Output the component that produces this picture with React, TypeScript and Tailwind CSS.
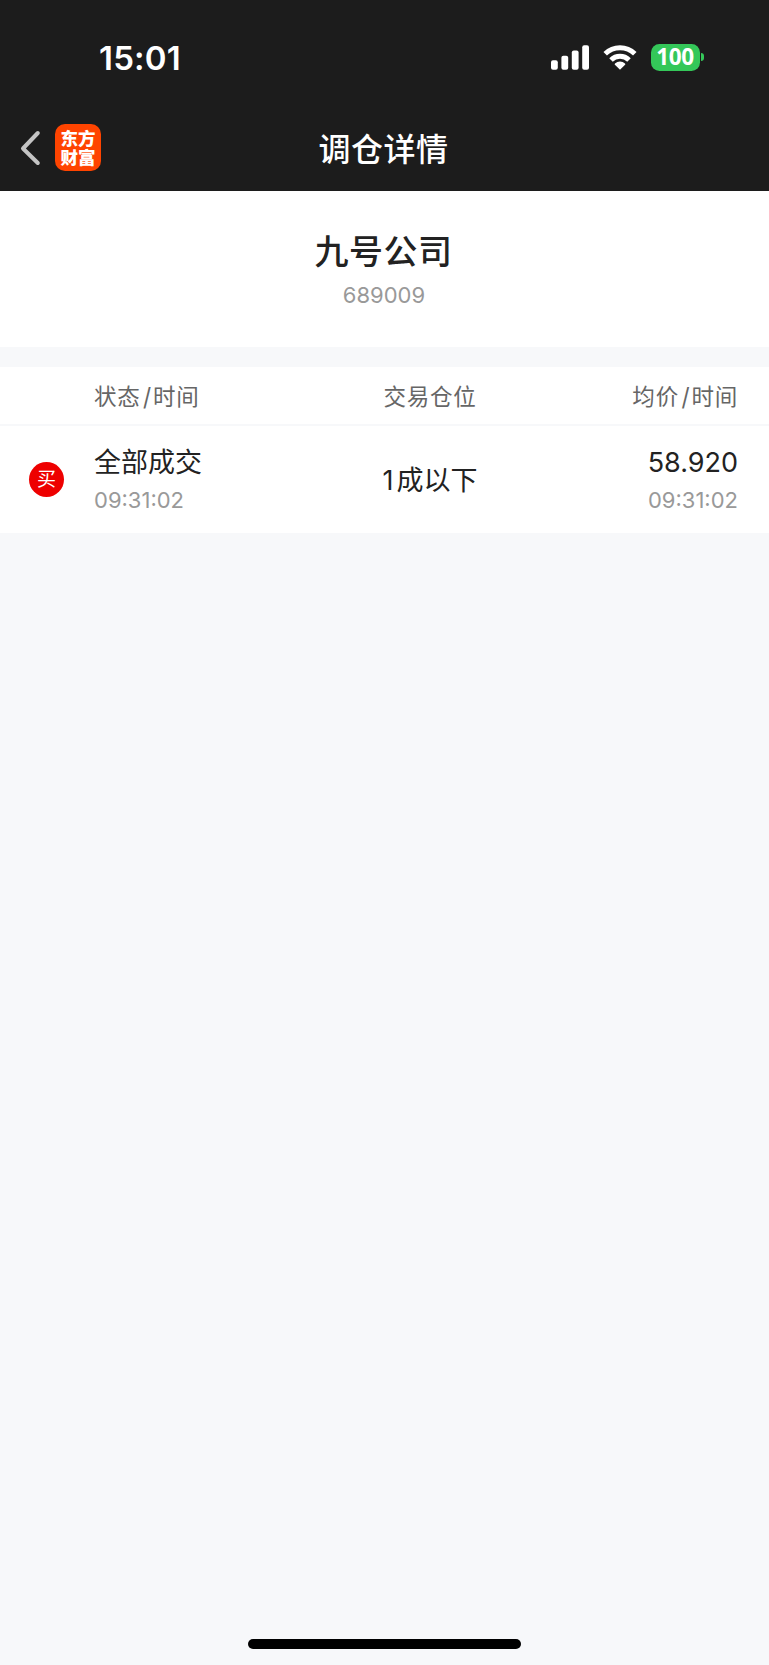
import type { ReactNode } from 'react';

interface Trade {
  side: string;
  status: string;
  statusTime: string;
  positionLevel: string;
  positionText: string;
  price: string;
  priceTime: string;
}

const trades: Trade[] = [
  {
    side: '买',
    status: '全部成交',
    statusTime: '09:31:02',
    positionLevel: '1',
    positionText: '成以下',
    price: '58.920',
    priceTime: '09:31:02',
  },
];

function SignalIcon() {
  return (
    <svg className="h-[25px] w-[39px]" viewBox="0 0 39 25" fill="currentColor">
      <rect x="0" y="15.3" width="6.8" height="9.5" rx="2" />
      <rect x="10.4" y="10.8" width="6.8" height="14" rx="2" />
      <rect x="20.8" y="5.5" width="6.8" height="19.3" rx="2" />
      <rect x="31.2" y="0.3" width="6.8" height="24.5" rx="2" />
    </svg>
  );
}

function WifiIcon() {
  return (
    <svg className="ml-[13px] h-[25px] w-[34px]" viewBox="0 0 34 25">
      <g fill="none" stroke="currentColor" strokeWidth="5">
        <path d="M2.2 8.7a21.2 21.2 0 0 1 29.6 0" />
        <path d="M8 15a12.8 12.8 0 0 1 18 0" />
      </g>
      <path d="M17 24.8l-5.1-5.1q-.6-.7.1-1.3a7.6 7.6 0 0 1 10 0q.7.6.1 1.3z" fill="currentColor" />
    </svg>
  );
}

function Battery() {
  return (
    <div className="ml-[14px] flex items-center">
      <div className="flex h-[27px] w-[49px] items-center justify-center rounded-[8.5px] bg-[#34c759] pb-px font-['Open_Sans',sans-serif] text-[22.5px] leading-[26px] font-bold tracking-[-0.3px]">
        100
      </div>
      <div className="ml-[1.5px] h-2 w-[3px] rounded-r-full bg-[#34c759]" />
    </div>
  );
}

function StatusBar() {
  return (
    <div className="flex h-[104px] items-start justify-between pt-[43px] pr-[65px] pl-[99px]">
      <div className="pt-px text-[33px] leading-7 font-semibold tracking-[0.2px]">15:01</div>
      <div className="flex h-7 items-center">
        <SignalIcon />
        <WifiIcon />
        <Battery />
      </div>
    </div>
  );
}

function NavBar() {
  return (
    <div className="grid h-[87px] grid-cols-[1fr_auto_1fr] items-center">
      <div className="flex items-center pl-5">
        <svg className="h-9 w-[22px]" viewBox="0 0 22 36" fill="none" stroke="#c4c4c4" strokeWidth="4" strokeLinecap="round" strokeLinejoin="round">
          <path d="M17.8 3L3 18.5L17.8 33" />
        </svg>
        <div className="ml-[13px] flex h-[47px] w-[46px] flex-col items-center justify-center rounded-[10px] bg-[#ff4400] text-[17.5px] leading-[19px] font-black">
          <span>东方</span>
          <span>财富</span>
        </div>
      </div>
      <h1 className="pt-1 pr-0.5 text-[32px] leading-10 font-medium tracking-[0.5px]">调仓详情</h1>
    </div>
  );
}

function ColumnTitle({ name }: { name: string }) {
  return (
    <>
      {name}
      <span className="mr-px ml-[2.5px] inline-block scale-y-110">/</span>
      时间
    </>
  );
}

function Cell({ main, time }: { main: ReactNode; time: string }) {
  return (
    <div>
      <div className="text-[27px] leading-9 text-[#222]">{main}</div>
      <div className="mt-[3px] text-[22px] leading-8 text-[#999]">{time}</div>
    </div>
  );
}

export default function App() {
  return (
    <div className="flex h-[1665px] w-[769px] flex-col bg-[#f7f8fa] font-['Inter','Noto_Sans_CJK_SC',sans-serif]">
      <header className="h-[191px] bg-[#1c1c1c] text-white">
        <StatusBar />
        <NavBar />
      </header>

      <section className="h-[156px] bg-white pt-9 text-center">
        <h2 className="mr-0.5 text-[34px] leading-[50px] font-medium tracking-[0.5px] text-[#222]">九号公司</h2>
        <p className="mt-0.5 mr-px text-[22px] leading-8 text-[#999]">689009</p>
      </section>

      <section className="mt-5 bg-white">
        <div className="flex h-[59px] items-center border-b-2 border-[#f7f8fa] pt-0.5 pr-[31px] pl-[94px] text-[22.5px] tracking-[0.8px] text-[#666]">
          <div className="w-[222px]">
            <ColumnTitle name="状态" />
          </div>
          <div className="w-[228px] text-center">交易仓位</div>
          <div className="flex-1 text-right">
            <ColumnTitle name="均价" />
          </div>
        </div>
        {trades.map((trade, i) => (
          <div key={i} className="flex h-[107px] items-center pr-[31px] pl-[29px]">
            <div className="mr-[30px] flex h-[35px] w-[35px] items-center justify-center rounded-full bg-[#ee0000] text-[19px] leading-none text-white">
              {trade.side}
            </div>
            <div className="w-[222px] pt-px">
              <Cell main={trade.status} time={trade.statusTime} />
            </div>
            <div className="w-[228px] pt-1 text-center text-[27px] text-[#222]">
              <span className="mr-[3px]">{trade.positionLevel}</span>
              {trade.positionText}
            </div>
            <div className="flex-1 pt-px text-right">
              <Cell main={trade.price} time={trade.priceTime} />
            </div>
          </div>
        ))}
      </section>

      {/* home indicator */}
      <div className="mx-auto mt-auto mb-4 h-2.5 w-[273px] rounded-full bg-black" />
    </div>
  );
}
